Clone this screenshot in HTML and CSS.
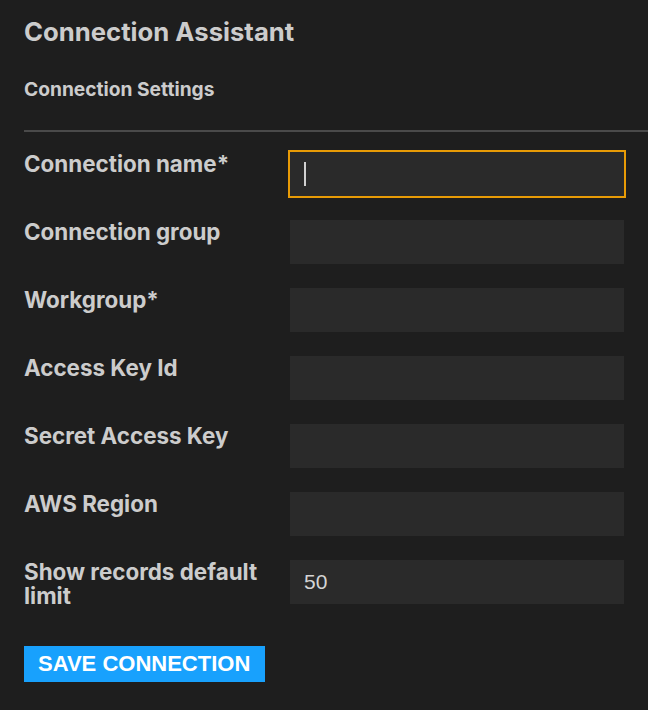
FILE: index.html
```html
<!DOCTYPE html>
<html>
<head>
<meta charset="utf-8">
<link rel="stylesheet" href="styles.css">
</head>
<body>
<div class="page">
  <h1 class="title">Connection Assistant</h1>
  <h2 class="subtitle">Connection Settings</h2>
  <hr class="divider">
  <form class="form">
    <label class="label">Connection name*</label>
    <div class="field focused"><span class="caret"></span></div>
    <label class="label">Connection group</label>
    <div class="field"></div>
    <label class="label">Workgroup*</label>
    <div class="field"></div>
    <label class="label">Access Key Id</label>
    <div class="field"></div>
    <label class="label">Secret Access Key</label>
    <div class="field"></div>
    <label class="label">AWS Region</label>
    <div class="field"></div>
    <label class="label">Show records default limit</label>
    <div class="field"><span class="value">50</span></div>
  </form>
  <button class="save" type="button">SAVE CONNECTION</button>
</div>
</body>
</html>
```

FILE: styles.css
```css
html, body {
  margin: 0;
  padding: 0;
  background: #1e1e1e;
}
.page {
  padding: 17px 0 0 24px;
  display: flex;
  flex-direction: column;
  font-family: Inter, "Noto Sans", sans-serif;
  color: #cccccc;
}
.title {
  margin: 0;
  font-size: 25.7px;
  font-weight: 700;
  line-height: 30px;
}
.subtitle {
  margin: 30px 0 0 0;
  font-size: 19.2px;
  font-weight: 700;
  line-height: 24px;
}
.divider {
  margin: 29px 0 0 0;
  border: 0;
  height: 2px;
  background: #4a4a4a;
}
.form {
  margin-top: 20px;
  display: grid;
  grid-template-columns: 266px 334px;
  row-gap: 24px;
}
.label {
  font-size: 22.4px;
  font-weight: 700;
  line-height: 24px;
  padding-right: 6px;
}
.field {
  height: 44px;
  background: #2a2a2a;
  display: flex;
  align-items: center;
  padding-left: 14px;
  box-sizing: border-box;
}
.field.focused {
  outline: 2px solid #e89b06;
}
.caret {
  width: 2px;
  height: 24px;
  background: #d0d0d0;
}
.value {
  font-family: "Liberation Sans", Arial, sans-serif;
  font-size: 21px;
  color: #d4d4d4;
}
.save {
  align-self: flex-start;
  margin-top: 38px;
  height: 36px;
  padding: 0 15px 0 14px;
  border: 0;
  background: #18a1fd;
  color: #ffffff;
  font-family: "Liberation Sans", Arial, sans-serif;
  font-size: 22px;
  font-weight: 700;
}
```
